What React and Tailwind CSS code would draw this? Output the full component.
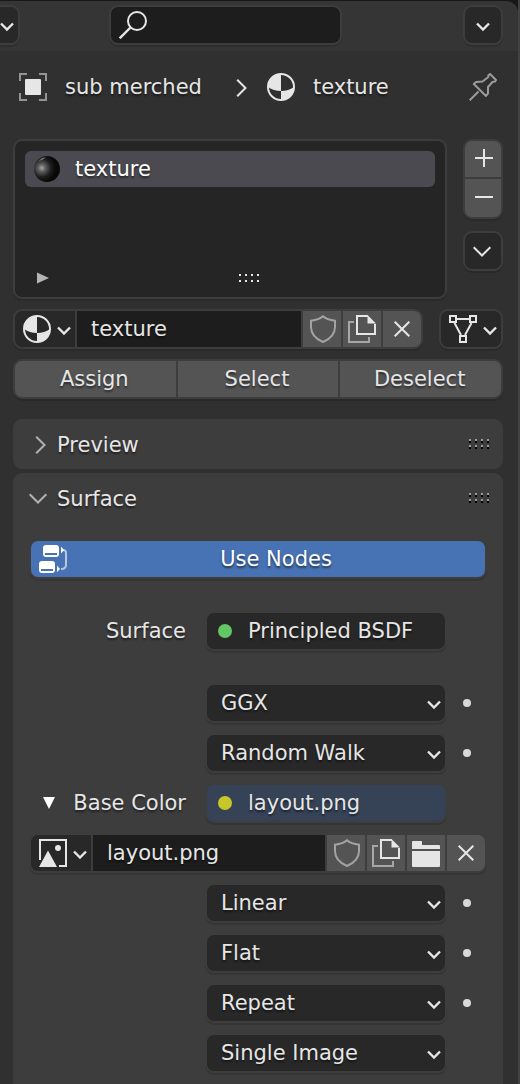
import React, { useState } from "react";

const shadow = "[text-shadow:0_2px_2px_rgba(0,0,0,0.5)]";
const frame = "border-2 border-[#3d3d3d] rounded-[9px] shadow-[0_2px_0_rgba(0,0,0,0.12)]";
const cell = "flex items-center justify-center bg-[#545454]";

function Icon({ w = 28, h = 28, className = "", children }) {
  return (
    <svg
      width={w}
      height={h}
      viewBox={`0 0 ${w} ${h}`}
      fill="none"
      stroke="#e6e6e6"
      strokeWidth="2"
      className={`shrink-0 ${className}`}
      aria-hidden="true"
    >
      {children}
    </svg>
  );
}

const SmallChevron = ({ className = "" }) => (
  <Icon w={14} h={10} className={className}>
    <path d="M1 1.5 L7 7.5 L13 1.5" strokeWidth="2.4" />
  </Icon>
);

const WideChevron = ({ className = "" }) => (
  <Icon w={18} h={12} className={className}>
    <path d="M0.7 1.2 L9 9.5 L17.3 1.2" stroke="currentColor" />
  </Icon>
);

const RightChevron = ({ className = "" }) => (
  <Icon w={12} h={18} className={className}>
    <path d="M1.2 0.7 L9.5 9 L1.2 17.3" stroke="currentColor" />
  </Icon>
);

const MaterialIcon = () => (
  <Icon>
    <circle cx="14" cy="14" r="13" />
    <path d="M14 1 A13 13 0 0 0 1 14 Q6.500 18 14 18 Z" fill="#e6e6e6" stroke="none" />
    <path d="M14 18 Q21.500 18 27 14 A13 13 0 0 1 14 27 Z" fill="#e6e6e6" stroke="none" />
  </Icon>
);

const ShieldIcon = () => (
  <Icon>
    <path
      d="M15 1.300 C12 4 7.500 5.200 3 5.700 V12 C3 19.500 8 24 15 27 C22 24 27 19.500 27 12 V5.700 C22.500 5.200 18 4 15 1.300 Z"
      stroke="#a3a3a3"
    />
  </Icon>
);

const CopyIcon = () => (
  <Icon>
    <path d="M6 7 H1 V27 H21 V22" stroke="#a6a6a6" />
    <path d="M20 1 H9 V19 H27 V9" />
    <path d="M19.500 0 L28 8.500 H19.500 Z" fill="#e6e6e6" stroke="none" />
  </Icon>
);

const CloseIcon = () => (
  <Icon w={16} h={16}>
    <path d="M0.700 0.700 L15.300 15.300 M15.300 0.700 L0.700 15.300" />
  </Icon>
);

function DragDots({ plain = false }) {
  return (
    <Icon w={20} h={10}>
      {[0, 6, 12, 18].map((x) =>
        [0, 6].map((y) => (
          <g key={`${x}-${y}`} stroke="none">
            <rect x={x} y={y} width="2" height="2" fill={plain ? "#e6e6e6" : "#9c9c9c"} />
            {!plain && <rect x={x} y={y + 2} width="2" height="2" fill="#000" />}
          </g>
        ))
      )}
    </Icon>
  );
}

function IdBlock({ icon, label, value, className = "", children }) {
  const [text, setText] = useState(value);
  return (
    <div className={`flex h-10 gap-[2px] overflow-hidden bg-[#3d3d3d] ${frame} ${className}`}>
      <button aria-label={`Browse ${label}`} className="flex w-[60px] shrink-0 items-center gap-[6px] bg-[#282828] pl-2">
        {icon}
        <SmallChevron className="mt-1" />
      </button>
      <input
        aria-label={label}
        value={text}
        onChange={(e) => setText(e.target.value)}
        className={`min-w-0 flex-1 bg-[#1d1d1d] pl-[14px] outline-none ${shadow}`}
      />
      {children}
    </div>
  );
}

const CellButton = ({ label, children }) => (
  <button aria-label={label} className={`w-[38px] shrink-0 ${cell}`}>
    {children}
  </button>
);

function Row({ label, dot, children }) {
  return (
    <div className="flex items-center">
      <div className="mr-[19px] flex w-[157px] shrink-0 items-center justify-end">{label}</div>
      <div className="min-w-0 flex-1">{children}</div>
      <div className="flex w-10 shrink-0 pl-4">
        {dot && <button aria-label="Animate property" className="size-2 rounded-full bg-[#d9d9d9]" />}
      </div>
    </div>
  );
}

function SelectRow({ label, options }) {
  return (
    <Row dot={label !== "Source"}>
      <div className="relative">
        <select
          aria-label={label}
          className={`block h-10 w-full appearance-none bg-[#282828] pl-[14px] outline-none ${frame} ${shadow}`}
        >
          {options.map((o) => (
            <option key={o}>{o}</option>
          ))}
        </select>
        <SmallChevron className="pointer-events-none absolute top-[17px] right-[6px]" />
      </div>
    </Row>
  );
}

function SocketButton({ color, bg, children }) {
  return (
    <button className={`flex h-10 w-full items-center gap-4 pl-[11px] ${bg} ${frame} ${shadow}`}>
      <span className={`size-[14px] rounded-full ${color}`} />
      {children}
    </button>
  );
}

function PanelHeader({ open, title }) {
  return (
    <div className="flex h-[50px] items-center pr-[14px]">
      <button aria-expanded={open} className={`flex flex-1 items-center pt-[2px] text-left ${shadow}`}>
        <span className="flex w-11 shrink-0 items-center text-[#b0b0b0]">
          {open ? <WideChevron className="ml-4" /> : <RightChevron className="ml-[22px]" />}
        </span>
        {title}
      </button>
      <DragDots />
    </div>
  );
}

export default function App() {
  return (
    <div className="min-h-screen border-r-2 border-[#424242] bg-[#181818] pt-px font-['DejaVu_Sans',sans-serif] text-[21px] leading-[26px] text-[#e6e6e6]">
      <div className="flex min-h-[calc(100vh-1px)] flex-col overflow-hidden rounded-tr-[12px] bg-[#303030]">
        <header className="flex h-[50px] items-center bg-[#353535] pr-[15px] pb-[2px]">
          <button
            aria-label="Editor type"
            className="flex h-10 w-5 items-center justify-end rounded-r-[9px] border-2 border-l-0 border-[#3d3d3d] bg-[#282828] pr-1 shadow-[0_2px_0_rgba(0,0,0,0.12)]"
          >
            <SmallChevron className="mt-1" />
          </button>
          <label className={`mr-[121px] ml-[89px] flex h-10 min-w-0 flex-1 items-center bg-[#1d1d1d] pl-2 ${frame}`}>
            <Icon>
              <circle cx="18" cy="10" r="9" />
              <path d="M11.500 16.500 L0.700 27.300" strokeWidth="2.400" />
            </Icon>
            <input aria-label="Search" className="ml-2 min-w-0 flex-1 bg-transparent outline-none" />
          </label>
          <button aria-label="Options" className={`flex size-10 items-center justify-center bg-[#282828] ${frame}`}>
            <SmallChevron className="mt-1" />
          </button>
        </header>

        <nav className={`flex h-[72px] items-center pr-[21px] pl-[19px] ${shadow}`}>
          <Icon>
            <path d="M1 8 V1 H8 M20 1 H27 V8 M27 20 V27 H20 M8 27 H1 V20" stroke="#949494" />
            <rect x="6" y="6" width="16" height="16" rx="1" fill="#e6e6e6" stroke="none" />
          </Icon>
          <a href="#object" className="ml-[18px] whitespace-nowrap">sub merched</a>
          <RightChevron className="mt-[2px] ml-[34px]" />
          <span className="ml-[19px] flex">
            <MaterialIcon />
          </span>
          <a href="#material" className="ml-[18px]">texture</a>
          <button aria-label="Pin" className="ml-auto">
            <Icon>
              <path
                d="M21 1 L27 7 L26 8.500 L23.500 9 L19 14 V20.500 L17 23 L4.800 11 L7 9 L13.500 8.500 L19.300 4 V2.500 Z M9.500 18.500 L0.700 27.300"
                stroke="#9c9c9c"
                strokeLinejoin="round"
              />
            </Icon>
          </button>
        </nav>

        <main className="flex flex-1 flex-col pt-4 pr-[15px] pl-[13px]">
          <div className="flex gap-4">
            <div className={`flex h-40 min-w-0 flex-1 flex-col bg-[#252525] p-[10px] ${frame}`}>
              <button className={`flex h-9 items-center gap-[15px] rounded-[6px] bg-[#4a4a50] pl-[9px] text-left text-white ${shadow}`}>
                <Icon w={26} h={26}>
                  <defs>
                    <radialGradient id="ball" cx="0.3" cy="0.46" r="0.55">
                      <stop offset="0" stopColor="#a8a8a8" />
                      <stop offset="0.25" stopColor="#606060" />
                      <stop offset="0.65" stopColor="#1c1c1c" />
                      <stop offset="1" stopColor="#080808" />
                    </radialGradient>
                    <linearGradient id="rim" x1="0" y1="0" x2="1" y2="0">
                      <stop offset="0" stopColor="#777" stopOpacity="0" />
                      <stop offset="0.6" stopColor="#999" />
                      <stop offset="1" stopColor="#777" stopOpacity="0" />
                    </linearGradient>
                  </defs>
                  <circle cx="13" cy="13" r="13" fill="url(#ball)" stroke="none" />
                  <path d="M3 6 Q7 1.500 13 1 Q9 3.500 3 6 Z" fill="url(#rim)" stroke="none" />
                </Icon>
                texture
              </button>
              <div className="mt-auto flex items-center pb-[3px] pl-3">
                <button aria-label="Filter" className="flex">
                  <Icon w={12} h={12}>
                    <path d="M0 0.500 L12 6 L0 11.500 Z" fill="#b5b5b5" stroke="none" />
                  </Icon>
                </button>
                <div className="flex flex-1 justify-center pt-[2px] pl-[14px]">
                  <DragDots plain />
                </div>
              </div>
            </div>
            <div className="flex w-10 shrink-0 flex-col gap-3">
              <div className={`flex h-20 flex-col gap-[2px] overflow-hidden bg-[#3d3d3d] ${frame}`}>
                <button aria-label="Add slot" className={`h-9 pb-[2px] pl-[2px] ${cell}`}>
                  <Icon w={18} h={18}>
                    <path d="M9 0 V18 M0 9 H18" />
                  </Icon>
                </button>
                <button aria-label="Remove slot" className={`flex-1 pb-[2px] pl-[2px] ${cell}`}>
                  <Icon w={18} h={18}>
                    <path d="M0 9 H18" />
                  </Icon>
                </button>
              </div>
              <button aria-label="Slot menu" className={`flex h-10 items-center justify-center bg-[#282828] pr-[2px] ${frame}`}>
                <WideChevron className="mt-[2px]" />
              </button>
            </div>
          </div>

          <div className="mt-[10px] flex gap-4">
            <IdBlock icon={<MaterialIcon />} label="Material" value="texture" className="min-w-0 flex-1">
              <CellButton label="Fake user"><ShieldIcon /></CellButton>
              <CellButton label="New material"><CopyIcon /></CellButton>
              <CellButton label="Unlink material"><CloseIcon /></CellButton>
            </IdBlock>
            <button aria-label="Link" className={`flex h-10 w-16 shrink-0 items-center gap-[6px] bg-[#282828] pl-2 ${frame}`}>
              <Icon>
                <path d="M8 4 H20 M5.500 8 L12 20 M22.500 8 L16 20" />
                <path d="M1 1 H7 V7 H1 Z M21 1 H27 V7 H21 Z M11 21 H17 V27 H11 Z" />
              </Icon>
              <SmallChevron className="mt-1" />
            </button>
          </div>

          <div className={`mt-[10px] grid h-10 grid-cols-3 gap-[2px] overflow-hidden bg-[#3d3d3d] ${frame}`}>
            {["Assign", "Select", "Deselect"].map((t) => (
              <button key={t} className={`pr-[2px] ${cell} ${shadow}`}>{t}</button>
            ))}
          </div>

          <section className="mt-5 rounded-[9px] bg-[#3d3d3d]">
            <PanelHeader title="Preview" />
          </section>

          <section className="mt-1 flex-1 rounded-t-[9px] bg-[#3d3d3d]">
            <PanelHeader open title="Surface" />
            <div className="flex flex-col gap-[10px] px-4 pt-4 pb-2">
              <button className={`flex h-10 items-center bg-[#4772b3] pl-2 text-white ${frame} ${shadow}`}>
                <Icon>
                  <path d="M24 5 Q27 5 27 8 V20 Q27 24 22 24" stroke="#b5c7e1" />
                  <g fill="#fff" stroke="none">
                    <rect x="4" y="0" width="16" height="12" rx="3" />
                    <rect x="0" y="16" width="16" height="12" rx="3" />
                    <path d="M22 1.500 L25 5 L22 8.500 Z M18 20.500 L21 24 L18 27 Z" />
                  </g>
                  <path d="M6 9 H18 M2 25 H14" stroke="#4772b3" />
                </Icon>
                <span className="flex-1 text-center">Use Nodes</span>
              </button>

              <div className="my-[22px]">
                <Row label={<span className={shadow}>Surface</span>}>
                  <SocketButton color="bg-[#63c763]" bg="bg-[#282828]">Principled BSDF</SocketButton>
                </Row>
              </div>

              <SelectRow label="Distribution" options={["GGX", "Multiscatter GGX"]} />
              <SelectRow label="Subsurface method" options={["Random Walk", "Christensen-Burley"]} />
              <Row
                label={
                  <button className={`flex items-center gap-[18px] whitespace-nowrap ${shadow}`}>
                    <Icon w={12} h={12}>
                      <path d="M0 0 H12 L6 12 Z" fill="#fff" stroke="none" />
                    </Icon>
                    Base Color
                  </button>
                }
              >
                <SocketButton color="bg-[#c7c729]" bg="bg-[#364256]">layout.png</SocketButton>
              </Row>
              <IdBlock
                label="Image"
                value="layout.png"
                icon={
                  <Icon>
                    <path d="M1 21 V1 H27 V27 H20" />
                    <path d="M0 28 L9 11.500 L18 28 Z" fill="#e6e6e6" stroke="none" />
                    <circle cx="19" cy="9" r="3" fill="#e6e6e6" stroke="none" />
                  </Icon>
                }
              >
                <CellButton label="Fake user"><ShieldIcon /></CellButton>
                <CellButton label="New image"><CopyIcon /></CellButton>
                <CellButton label="Open image">
                  <Icon>
                    <path
                      d="M0 10 V3 Q0 2 1 2 H9 Q10 2 10 3 V6 H27 Q28 6 28 7 V10 Z M0 12 H28 V27 Q28 28 27 28 H1 Q0 28 0 27 Z"
                      fill="#e6e6e6"
                      stroke="none"
                    />
                  </Icon>
                </CellButton>
                <CellButton label="Unlink image"><CloseIcon /></CellButton>
              </IdBlock>
              <SelectRow label="Interpolation" options={["Linear", "Closest", "Cubic"]} />
              <SelectRow label="Projection" options={["Flat", "Box", "Sphere"]} />
              <SelectRow label="Extension" options={["Repeat", "Extend", "Clip"]} />
              <SelectRow label="Source" options={["Single Image", "Image Sequence", "Movie"]} />
            </div>
          </section>
        </main>
      </div>
    </div>
  );
}
